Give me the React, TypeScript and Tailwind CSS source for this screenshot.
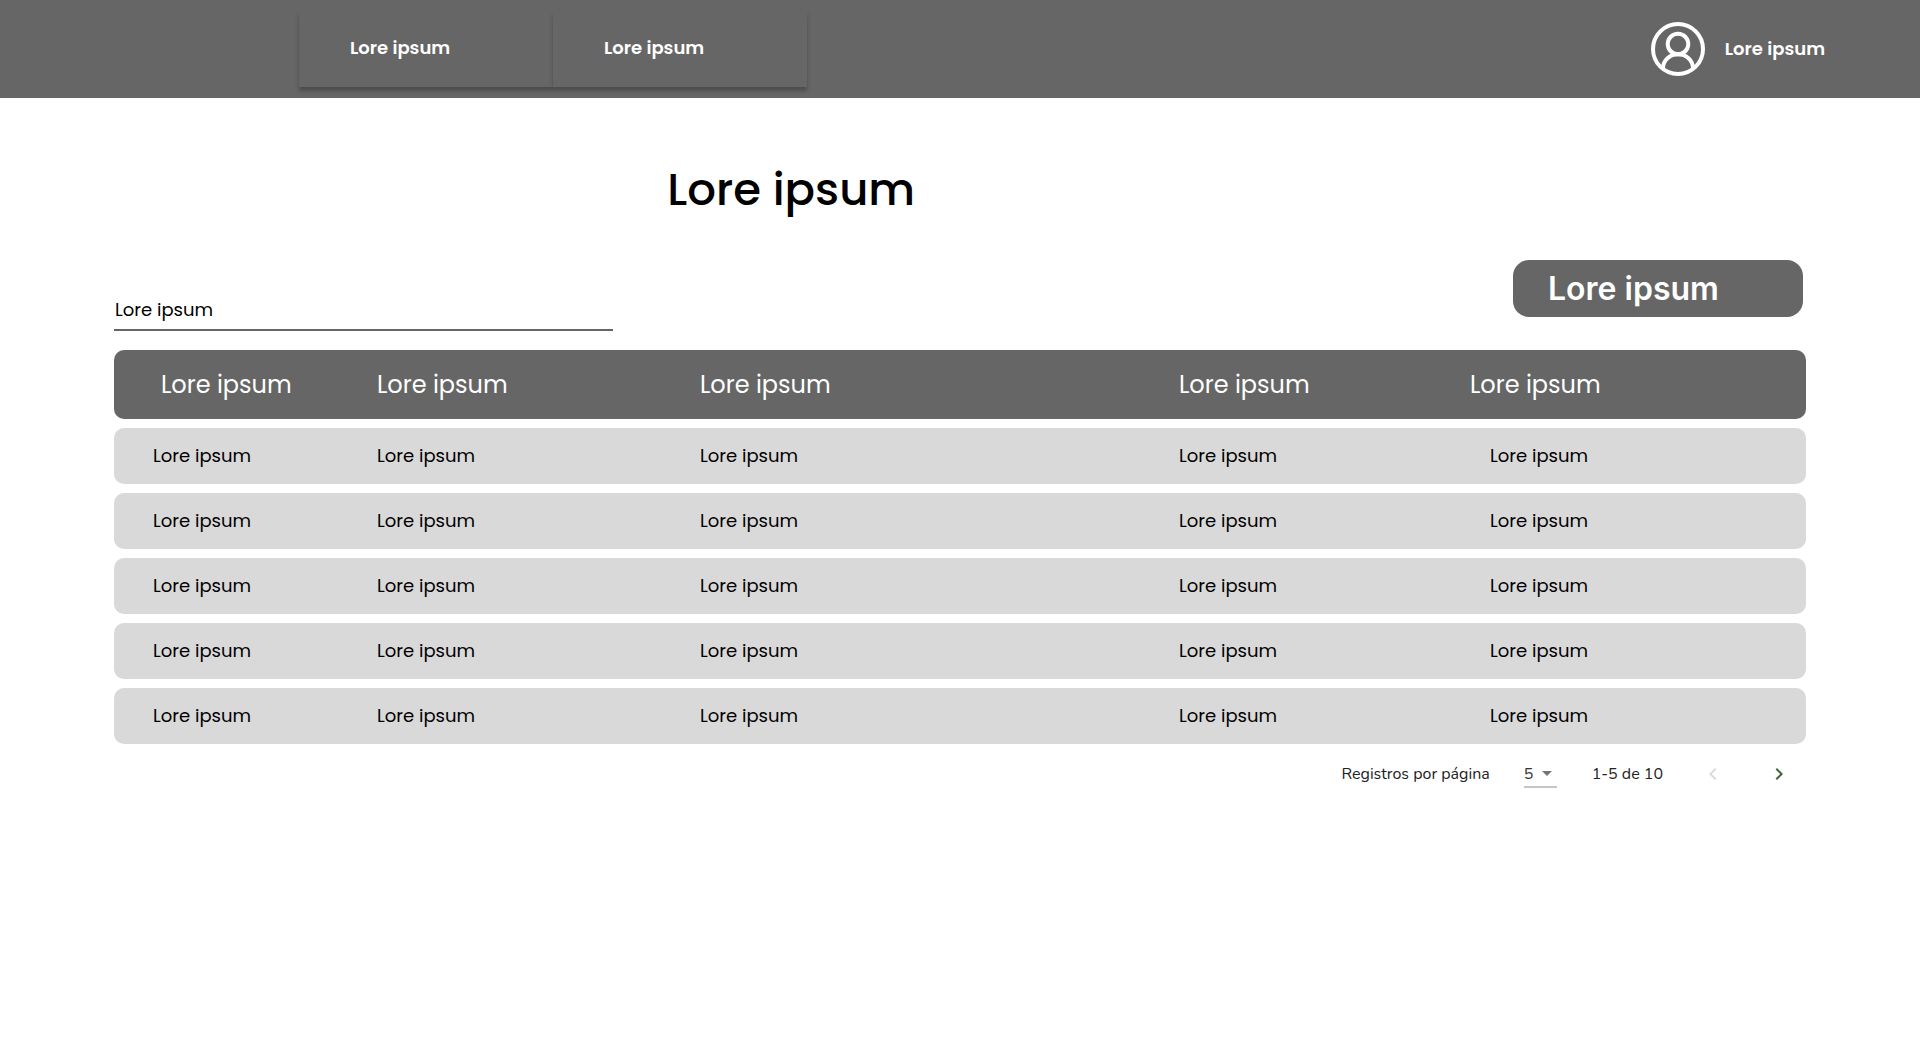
import { useState } from "react";

const columns = [
  { id: "c1", width: "w-[263px]", head: "pl-[47px]", cell: "pl-[39px] rounded-l-[10px]" },
  { id: "c2", width: "w-[323px]", head: "", cell: "" },
  { id: "c3", width: "w-[479px]", head: "", cell: "" },
  { id: "c4", width: "w-[291px]", head: "", cell: "" },
  { id: "c5", width: "w-[336px]", head: "", cell: "pl-5 rounded-r-[10px]" },
];

const rows = Array.from({ length: 5 }, () => columns.map(() => "Lore ipsum"));

function UserIcon() {
  return (
    <svg viewBox="0 0 54 54" className="size-[54px]" fill="none" stroke="currentColor" strokeWidth="4" aria-hidden="true">
      <circle cx="27" cy="27" r="25" />
      <circle cx="27" cy="22" r="10.3" />
      <path d="M12 46.5C12 38 19 32.3 27 32.3S42 38 42 46.5" />
    </svg>
  );
}

function Chevron({ d }: { d: string }) {
  return (
    <svg viewBox="0 0 24 24" className="size-6" fill="currentColor" aria-hidden="true">
      <path d={d} />
    </svg>
  );
}

export default function App() {
  const [search, setSearch] = useState("");

  return (
    <div className="min-h-screen bg-white font-['Poppins','Inter',sans-serif] text-black">
      <header className="flex h-[98px] items-center overflow-hidden bg-[#666666] pr-[95px] pl-[299px] text-[18px] font-semibold text-white">
        <nav className="flex h-[76px]">
          <a href="#" className="flex w-[254px] items-center bg-[#666666] pb-1 pl-[51px] shadow-[0_4px_4px_rgba(0,0,0,0.25)]">
            Lore ipsum
          </a>
          <a href="#" className="flex w-[254px] items-center bg-[#666666] pb-1 pl-[51px] shadow-[0_4px_4px_rgba(0,0,0,0.25)]">
            Lore ipsum
          </a>
        </nav>
        <a href="#" className="ml-auto flex items-center gap-5">
          <UserIcon />
          <span className="pb-0.5">Lore ipsum</span>
        </a>
      </header>

      <main className="px-[114px]">
        <h1 className="pt-[62px] pl-[32.7%] text-[45px] leading-[60px] font-medium">Lore ipsum</h1>

        <div className="flex items-end justify-between pt-10">
          <input
            type="text"
            aria-label="Lore ipsum"
            value={search}
            onChange={(e) => setSearch(e.target.value)}
            placeholder="Lore ipsum"
            className="block h-[37px] w-[499px] border-b-2 border-[#666666] pb-1 pl-px text-[18px] outline-none placeholder:text-black"
          />
          <button
            type="button"
            className="mr-[3px] mb-[14px] h-[57px] w-[290px] rounded-2xl bg-[#666666] pl-[35px] text-left font-['Inter',sans-serif] text-[32px] font-semibold text-white"
          >
            Lore ipsum
          </button>
        </div>

        <table className="mt-[10px] w-full table-fixed border-separate border-spacing-x-0 border-spacing-y-[9px] text-left">
          <colgroup>
            {columns.map((c) => (
              <col key={c.id} className={c.width} />
            ))}
          </colgroup>
          <thead>
            <tr className="h-[69px] text-[24px] text-white">
              {columns.map((c) => (
                <th
                  key={c.id}
                  scope="col"
                  className={`bg-[#666666] font-normal first:rounded-l-[10px] last:rounded-r-[10px] ${c.head}`}
                >
                  Lore ipsum
                </th>
              ))}
            </tr>
          </thead>
          <tbody>
            {rows.map((row, r) => (
              <tr key={r} className="h-14 text-[18px]">
                {row.map((text, i) => (
                  <td key={columns[i].id} className={`bg-[#d9d9d9] pb-0.5 ${columns[i].cell}`}>
                    {text}
                  </td>
                ))}
              </tr>
            ))}
          </tbody>
        </table>

        <div className="flex items-center justify-end pt-1.5 pr-[15px] font-['Nunito','Open_Sans',sans-serif] text-base text-[#222222]">
          <label htmlFor="page-size">Registros por página</label>
          <div className="relative mr-[35px] ml-[34px]">
            <select
              id="page-size"
              defaultValue="5"
              className="block h-[29px] w-[33px] appearance-none border-b-2 border-[#c6c6c6] bg-transparent pt-0.5 text-base text-[#333333] outline-none"
            >
              <option>5</option>
              <option>10</option>
            </select>
            <svg viewBox="0 0 10 5" className="pointer-events-none absolute top-3 right-[5px] h-[5px] w-[10px]" fill="#757575" aria-hidden="true">
              <path d="M0 0h10L5 5z" />
            </svg>
          </div>
          <span>1-5 de 10</span>
          <button type="button" disabled aria-label="Página anterior" className="ml-[38px] text-[#d8dbd8]">
            <Chevron d="M15.41 7.41 14 6l-6 6 6 6 1.41-1.41L10.83 12z" />
          </button>
          <button type="button" aria-label="Página siguiente" className="ml-[42px] text-[#42613a]">
            <Chevron d="M10 6 8.59 7.41 13.17 12l-4.58 4.59L10 18l6-6z" />
          </button>
        </div>
      </main>
    </div>
  );
}
